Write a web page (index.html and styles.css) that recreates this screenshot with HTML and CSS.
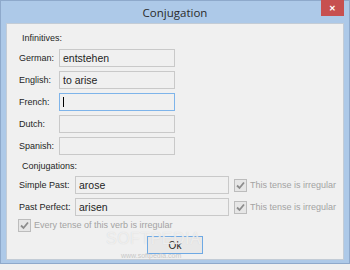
FILE: index.html
```html
<!DOCTYPE html>
<html lang="en">
<head>
    <meta charset="UTF-8">
    <title>Conjugation</title>
    <link rel="stylesheet" href="styles.css">
</head>
<body>
    <div class="window">
        <div class="titlebar">
            <span class="title">Conjugation</span>
            <span class="close">&#x2715;</span>
        </div>

        <div class="content">
            <div class="section-title">Infinitives:</div>

            <div class="row">
                <label class="lbl">German:</label>
                <div class="field">entstehen</div>
            </div>
            <div class="row">
                <label class="lbl">English:</label>
                <div class="field">to arise</div>
            </div>
            <div class="row">
                <label class="lbl">French:</label>
                <div class="field focused"><span class="caret"></span></div>
            </div>
            <div class="row">
                <label class="lbl">Dutch:</label>
                <div class="field"></div>
            </div>
            <div class="row">
                <label class="lbl">Spanish:</label>
                <div class="field"></div>
            </div>

            <div class="section-title second">Conjugations:</div>

            <div class="row tense">
                <label class="lbl">Simple Past:</label>
                <div class="field wide">arose</div>
                <div class="check">
                    <svg class="box" width="13" height="13" viewBox="0 0 13 13"><rect x="0.5" y="0.5" width="12" height="12" fill="#e6e6e6" stroke="#bcbcbc"/><path d="M3 6.5 L5.5 9 L10 3.5" fill="none" stroke="#8c8c8c" stroke-width="1.8"/></svg>
                    <span>This tense is irregular</span>
                </div>
            </div>
            <div class="row tense">
                <label class="lbl">Past Perfect:</label>
                <div class="field wide">arisen</div>
                <div class="check">
                    <svg class="box" width="13" height="13" viewBox="0 0 13 13"><rect x="0.5" y="0.5" width="12" height="12" fill="#e6e6e6" stroke="#bcbcbc"/><path d="M3 6.5 L5.5 9 L10 3.5" fill="none" stroke="#8c8c8c" stroke-width="1.8"/></svg>
                    <span>This tense is irregular</span>
                </div>
            </div>

            <div class="check every">
                <svg class="box" width="13" height="13" viewBox="0 0 13 13"><rect x="0.5" y="0.5" width="12" height="12" fill="#e6e6e6" stroke="#bcbcbc"/><path d="M3 6.5 L5.5 9 L10 3.5" fill="none" stroke="#8c8c8c" stroke-width="1.8"/></svg>
                <span>Every tense of this verb is irregular</span>
            </div>

            <div class="buttons">
                <button class="ok">Ok</button>
            </div>

            <div class="watermark">SOFTPEDIA</div>
            <div class="watermark-url">www.softpedia.com</div>
        </div>
    </div>
</body>
</html>
```

FILE: styles.css
```css
body {
    margin: 0;
    background: #f0f0f0;
    font-family: "Liberation Sans", Arial, sans-serif;
}

.window {
    width: 350px;
    height: 264px;
    box-sizing: border-box;
    border: 1px solid #8ea9cb;
    background: #adc9e8;
    display: flex;
    flex-direction: column;
}

.titlebar {
    position: relative;
    height: 22px;
    display: flex;
    justify-content: center;
    align-items: center;
}

.title {
    font-family: "Open Sans", "Liberation Sans", sans-serif;
    font-size: 11.5px;
    color: #2b2b2b;
    margin-top: 1px;
}

.close {
    position: absolute;
    top: -1px;
    right: 5px;
    width: 23px;
    height: 16px;
    background: #c75050;
    color: #fff;
    font-size: 8px;
    font-weight: bold;
    display: flex;
    justify-content: center;
    align-items: center;
}

.content {
    position: relative;
    margin: 0 5px;
    height: 237px;
    box-sizing: border-box;
    border: 1px solid #c3ccd6;
    background: #f0f0f0;
    padding: 7px 0 0 12px;
    font-size: 9px;
    color: #1e1e1e;
}

.section-title {
    height: 14px;
    line-height: 14px;
    margin-left: 3px;
    margin-bottom: 4px;
}

.section-title.second {
    margin-top: 1px;
    margin-bottom: 3px;
}

.row {
    display: flex;
    align-items: center;
    height: 18px;
    margin-bottom: 4px;
}

.lbl {
    width: 40px;
}

.tense .lbl {
    width: 56px;
}

.field {
    width: 116px;
    height: 18px;
    box-sizing: border-box;
    border: 1px solid #c9c9c9;
    background: #f0f0f0;
    font-size: 10.5px;
    color: #1e1e1e;
    padding-left: 3px;
    display: flex;
    align-items: center;
}

.field.wide {
    width: 154px;
}

.field.focused {
    border-color: #7eb4ea;
}

.caret {
    width: 1px;
    height: 10px;
    background: #000;
}

.check {
    display: flex;
    align-items: center;
    color: #a3a3a3;
    margin-left: 5px;
}

.check .box {
    margin-right: 3px;
}

.every {
    height: 14px;
    margin-left: -1px;
    margin-top: -2px;
}

.buttons {
    display: flex;
    justify-content: center;
    margin-top: 4px;
    padding-right: 12px;
}

.ok {
    width: 56px;
    height: 18px;
    border: 1px solid #6ea9e4;
    background: #e8e8e8;
    font-family: "Liberation Sans", Arial, sans-serif;
    font-size: 10px;
    color: #1e1e1e;
    padding: 0;
}

.watermark {
    position: absolute;
    left: 99px;
    top: 206px;
    font-size: 16px;
    line-height: 18px;
    letter-spacing: 0.5px;
    color: rgba(255, 255, 255, 0.6);
    text-shadow: 0 0 1px #d0d0d0;
    pointer-events: none;
}

.watermark-url {
    position: absolute;
    left: 114px;
    top: 228px;
    font-size: 7px;
    color: #c8c8c8;
}
```
